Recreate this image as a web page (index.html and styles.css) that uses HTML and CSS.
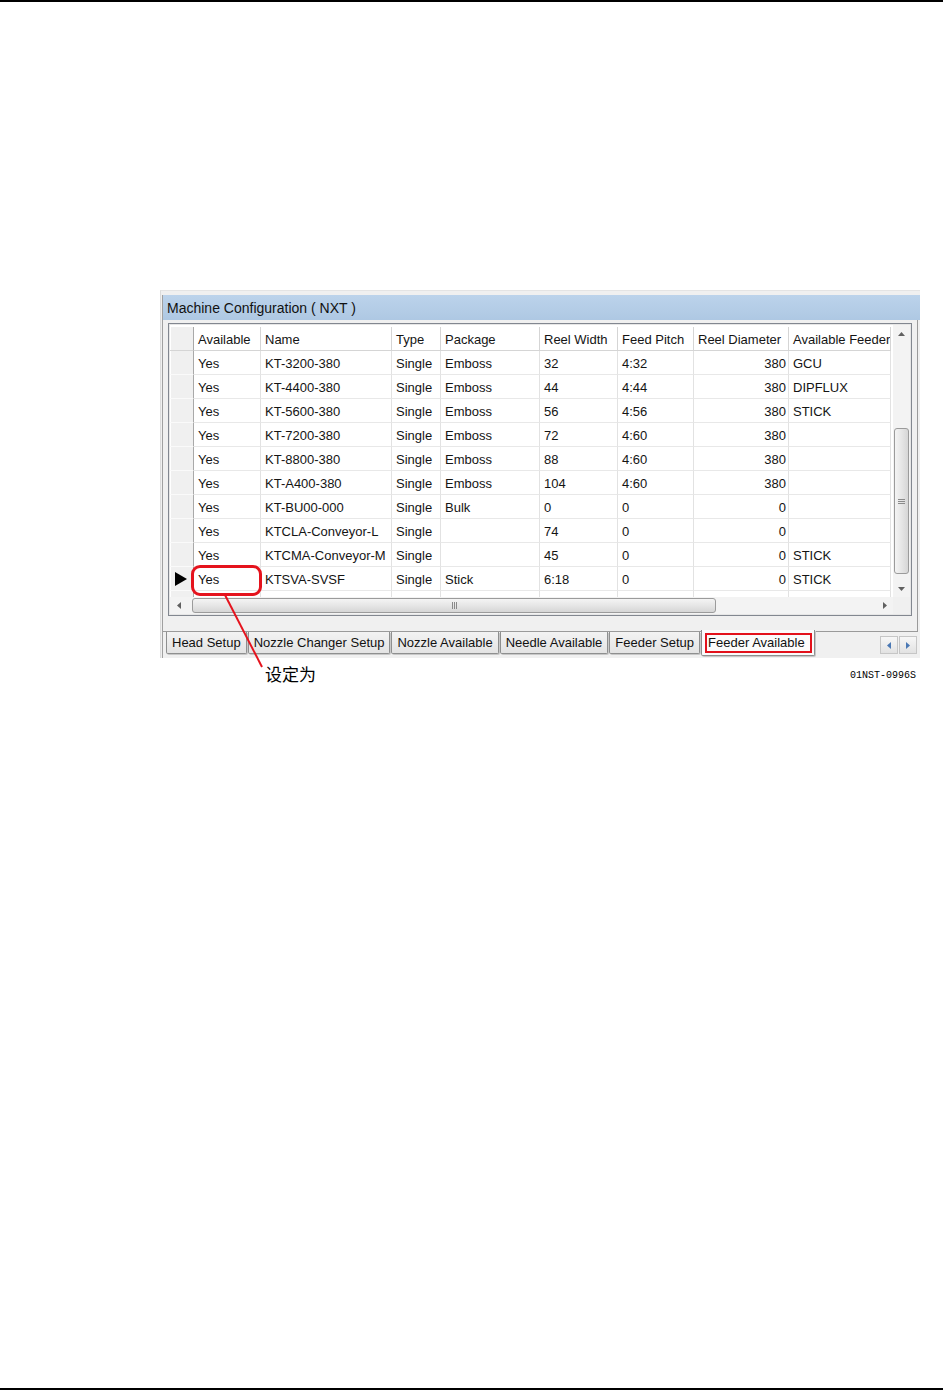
FILE: index.html
```html
<!DOCTYPE html>
<html lang="zh">
<head>
<meta charset="utf-8">
<title>Machine Configuration</title>
<link rel="stylesheet" href="styles.css">
</head>
<body>
<div class="page">
  <div class="rule"></div>

  <div class="figure">
    <div class="window">
      <div class="window-body">
        <div class="titlebar">Machine Configuration ( NXT )</div>

        <div class="panel">
          <div class="gridframe">
            <div class="viewport">
              <table class="grid">
                <colgroup>
                  <col class="c-rh"><col class="c-avail"><col class="c-name"><col class="c-type"><col class="c-pkg"><col class="c-rw"><col class="c-fp"><col class="c-rd"><col class="c-af">
                </colgroup>
                <thead>
                  <tr><th class="rh"></th><th>Available</th><th>Name</th><th>Type</th><th>Package</th><th>Reel Width</th><th>Feed Pitch</th><th>Reel Diameter</th><th>Available Feeder</th></tr>
                </thead>
                <tbody>
                  <tr><td class="rh"></td><td>Yes</td><td>KT-3200-380</td><td>Single</td><td>Emboss</td><td>32</td><td>4:32</td><td class="num">380</td><td>GCU</td></tr>
                  <tr><td class="rh"></td><td>Yes</td><td>KT-4400-380</td><td>Single</td><td>Emboss</td><td>44</td><td>4:44</td><td class="num">380</td><td>DIPFLUX</td></tr>
                  <tr><td class="rh"></td><td>Yes</td><td>KT-5600-380</td><td>Single</td><td>Emboss</td><td>56</td><td>4:56</td><td class="num">380</td><td>STICK</td></tr>
                  <tr><td class="rh"></td><td>Yes</td><td>KT-7200-380</td><td>Single</td><td>Emboss</td><td>72</td><td>4:60</td><td class="num">380</td><td></td></tr>
                  <tr><td class="rh"></td><td>Yes</td><td>KT-8800-380</td><td>Single</td><td>Emboss</td><td>88</td><td>4:60</td><td class="num">380</td><td></td></tr>
                  <tr><td class="rh"></td><td>Yes</td><td>KT-A400-380</td><td>Single</td><td>Emboss</td><td>104</td><td>4:60</td><td class="num">380</td><td></td></tr>
                  <tr><td class="rh"></td><td>Yes</td><td>KT-BU00-000</td><td>Single</td><td>Bulk</td><td>0</td><td>0</td><td class="num">0</td><td></td></tr>
                  <tr><td class="rh"></td><td>Yes</td><td>KTCLA-Conveyor-L</td><td>Single</td><td></td><td>74</td><td>0</td><td class="num">0</td><td></td></tr>
                  <tr><td class="rh"></td><td>Yes</td><td>KTCMA-Conveyor-M</td><td>Single</td><td></td><td>45</td><td>0</td><td class="num">0</td><td>STICK</td></tr>
                  <tr><td class="rh current"><svg class="row-pointer" width="12" height="14" viewBox="0 0 12 14"><polygon points="0,0 12,7 0,14" fill="#000"/></svg></td><td>Yes</td><td>KTSVA-SVSF</td><td>Single</td><td>Stick</td><td>6:18</td><td>0</td><td class="num">0</td><td>STICK</td></tr>
                  <tr><td class="rh"></td><td></td><td></td><td></td><td></td><td></td><td></td><td class="num"></td><td></td></tr>
                </tbody>
              </table>
            </div>

            <div class="vscroll">
              <div class="sbtn"><svg width="7" height="4" viewBox="0 0 7 4"><polygon points="0,4 3.5,0 7,4" fill="#606060"/></svg></div>
              <div class="vtrack">
                <div class="vthumb"><svg width="7" height="7" viewBox="0 0 7 7"><path d="M0 1.5H7M0 3.5H7M0 5.5H7" stroke="#8a8a8a" stroke-width="1"/></svg></div>
              </div>
              <div class="sbtn"><svg width="7" height="4" viewBox="0 0 7 4"><polygon points="0,0 3.5,4 7,0" fill="#606060"/></svg></div>
            </div>

            <div class="hscroll">
              <div class="sbtn"><svg width="4" height="7" viewBox="0 0 4 7"><polygon points="4,0 0,3.5 4,7" fill="#606060"/></svg></div>
              <div class="htrack">
                <div class="hthumb"><svg width="7" height="7" viewBox="0 0 7 7"><path d="M1.5 0V7M3.5 0V7M5.5 0V7" stroke="#8a8a8a" stroke-width="1"/></svg></div>
              </div>
              <div class="sbtn"><svg width="4" height="7" viewBox="0 0 4 7"><polygon points="0,0 4,3.5 0,7" fill="#606060"/></svg></div>
            </div>
            <div class="corner"></div>
          </div>
        </div>

        <div class="tabs">
          <div class="tab">Head Setup</div>
          <div class="tab">Nozzle Changer Setup</div>
          <div class="tab">Nozzle Available</div>
          <div class="tab">Needle Available</div>
          <div class="tab">Feeder Setup</div>
          <div class="tab active"><span class="hl">Feeder Available</span></div>
          <div class="tabnav">
            <div class="navbtn"><svg width="4" height="7" viewBox="0 0 4 7"><polygon points="4,0 0,3.5 4,7" fill="#4a78b4"/></svg></div>
            <div class="navbtn"><svg width="4" height="7" viewBox="0 0 4 7"><polygon points="0,0 4,3.5 0,7" fill="#4a78b4"/></svg></div>
          </div>
        </div>
      </div>
    </div>

    <div class="caption">
      <span class="callout">设定为</span>
      <span class="code">01NST-0996S</span>
    </div>

    <!-- callout marking the Available cell of the current row -->
    <div class="mark"></div>
    <svg class="leader" width="50" height="80" viewBox="0 0 50 80">
      <line x1="5" y1="5" x2="42" y2="77" stroke="#e5131d" stroke-width="2"/>
    </svg>
  </div>

  <div class="rule rule-bottom"></div>
</div>
</body>
</html>
```

FILE: styles.css
```css
* {
  box-sizing: border-box;
}

body {
  margin: 0;
  background: #fff;
  font-family: "Liberation Sans", Arial, sans-serif;
}

.page {
  height: 1391px;
  display: flex;
  flex-direction: column;
}

.rule {
  flex: none;
  height: 2px;
  background: #000;
}

.rule-bottom {
  margin-top: auto;
  margin-bottom: 1px;
}

/* ---------- figure ---------- */

.figure {
  position: relative;
  width: 760px;
  margin: 288px 0 0 160px;
}

.window {
  height: 368px;
  background: #f0f0f0;
  border-top: 1px solid #e4e4e4;
  border-left: 1px solid #dcdcdc;
  padding: 4px 0 0 1px;
}

.window-body {
  height: 363px;
  border-left: 1px solid #a0a0a0;
  display: flex;
  flex-direction: column;
}

.titlebar {
  flex: none;
  height: 25px;
  line-height: 24px;
  padding: 1px 0 0 4px;
  font-size: 14px;
  color: #111;
  background: linear-gradient(#bcd3eb, #aec8e3);
}

.panel {
  flex: none;
  width: 755px;
  height: 312px;
  padding: 3px 5px 0 5px;
  border-right: 1px solid #9a9a9a;
  border-bottom: 1px solid #9a9a9a;
}

.gridframe {
  width: 744px;
  border: 1px solid #828790;
  padding: 1px;
  background: #e6e6e6;
  display: grid;
  grid-template-columns: 723px 17px;
  grid-template-rows: 272px 17px;
}

.viewport {
  overflow: hidden;
  background: #fff;
  padding-top: 2px;
}

/* ---------- data grid ---------- */

.grid {
  table-layout: fixed;
  width: 721px;
  border-collapse: separate;
  border-spacing: 0;
  font-size: 13px;
  color: #141414;
}

.c-rh { width: 24px; }
.c-avail { width: 67px; }
.c-name { width: 131px; }
.c-type { width: 49px; }
.c-pkg { width: 99px; }
.c-rw { width: 78px; }
.c-fp { width: 76px; }
.c-rd { width: 95px; }
.c-af { width: 102px; }

.grid th,
.grid td {
  box-sizing: border-box;
  height: 24px;
  padding: 2px 0 0 4px;
  border-right: 1px solid #e2e2e2;
  border-bottom: 1px solid #e8e8e8;
  white-space: nowrap;
  overflow: hidden;
  text-align: left;
  font-weight: normal;
  vertical-align: middle;
}

.grid thead th {
  height: 24px;
  border-right: 1px solid #d5d5d5;
  border-bottom: 1px solid #d5d5d5;
}

.grid td.num {
  text-align: right;
  padding: 2px 2px 0 0;
}

.grid .rh {
  padding: 0;
  background: #f0f0f0;
  border-right: 1px solid #a9a9a9;
  border-bottom: 1px solid #fafafa;
  box-shadow: inset 1px 0 #ffffff;
}

.grid thead .rh {
  border-bottom: 1px solid #d5d5d5;
}

.row-pointer {
  display: block;
  margin-left: 5px;
}

/* ---------- scrollbars ---------- */

.vscroll {
  display: flex;
  flex-direction: column;
  background: #f3f3f3;
}

.sbtn {
  flex: none;
  width: 17px;
  height: 17px;
  display: flex;
  align-items: center;
  justify-content: center;
}

.vtrack {
  flex: 1;
  display: flex;
  flex-direction: column;
  align-items: center;
}

.vthumb {
  width: 15px;
  height: 146px;
  margin-top: 86px;
  border: 1px solid #9b9b9b;
  border-radius: 3px;
  background: linear-gradient(to right, #f4f4f4, #e6e6e6 50%, #d6d6d6);
  display: flex;
  align-items: center;
  justify-content: center;
}

.hscroll {
  display: flex;
  background: #f3f3f3;
}

.htrack {
  flex: 1;
  display: flex;
  align-items: center;
}

.hthumb {
  width: 524px;
  height: 15px;
  margin-left: 5px;
  border: 1px solid #9b9b9b;
  border-radius: 3px;
  background: linear-gradient(#f4f4f4, #e6e6e6 50%, #d6d6d6);
  display: flex;
  align-items: center;
  justify-content: center;
}

.corner {
  background: #f0f0f0;
}

/* ---------- tabs ---------- */

.tabs {
  flex: none;
  height: 24px;
  display: flex;
  align-items: flex-start;
  gap: 1px;
  padding-left: 3px;
}

.tab {
  height: 22px;
  padding: 0 5px;
  border: 1px solid #8e8f8f;
  border-top: none;
  border-radius: 0 0 2px 2px;
  background: linear-gradient(#f3f3f3, #e3e3e3);
  box-shadow: 1px 1px 0 #c8c8c8;
  font-size: 13px;
  line-height: 21px;
  color: #111;
  white-space: nowrap;
}

.tab.active {
  height: 26px;
  margin-top: -2px;
  padding: 0 2px 0 3px;
  background: #fbfbfb;
  display: flex;
  align-items: center;
}

.hl {
  border: 2px solid #e3111b;
  padding: 0 5px 0 1px;
  line-height: 16px;
}

.tabnav {
  display: flex;
  margin: 4px 3px 0 auto;
}

.navbtn {
  width: 18px;
  height: 18px;
  border: 1px solid #c6c6c6;
  background: linear-gradient(#f7f7f7, #e2e2e2);
  display: flex;
  align-items: center;
  justify-content: center;
}

.navbtn + .navbtn {
  margin-left: 1px;
}

/* ---------- caption ---------- */

.caption {
  display: flex;
  align-items: center;
  height: 24px;
  margin-top: 4px;
}

.callout {
  margin-left: 105px;
  font-family: "Noto Sans CJK SC", sans-serif;
  font-size: 17px;
  line-height: 20px;
  color: #000;
}

.code {
  margin-left: auto;
  margin-right: 4px;
  margin-top: 2px;
  font-family: "Liberation Mono", monospace;
  font-size: 10px;
  color: #000;
}

/* ---------- annotation overlay ---------- */

.mark {
  position: absolute;
  left: 31px;
  top: 275px;
  width: 71px;
  height: 31px;
  border: 3px solid #e5131d;
  border-radius: 9px;
}

.leader {
  position: absolute;
  left: 60px;
  top: 300px;
}
```
